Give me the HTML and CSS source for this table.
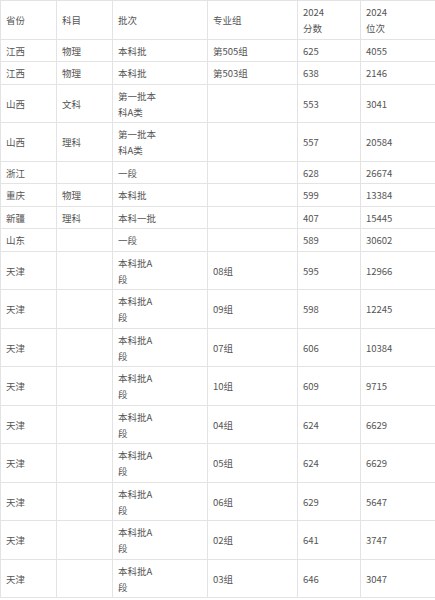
FILE: index.html
```html
<!DOCTYPE html>
<html lang="zh">
<head>
<meta charset="utf-8">
<link rel="stylesheet" href="styles.css">
</head>
<body>
<table class="score-table">
  <colgroup>
    <col class="c1"><col class="c2"><col class="c3"><col class="c4"><col class="c5"><col class="c6">
  </colgroup>
  <tbody>
    <tr><td>省份</td><td>科目</td><td>批次</td><td>专业组</td><td>2024<br>分数</td><td>2024<br>位次</td></tr>
    <tr><td>江西</td><td>物理</td><td>本科批</td><td>第505组</td><td>625</td><td>4055</td></tr>
    <tr><td>江西</td><td>物理</td><td>本科批</td><td>第503组</td><td>638</td><td>2146</td></tr>
    <tr><td>山西</td><td>文科</td><td>第一批本<br>科A类</td><td></td><td>553</td><td>3041</td></tr>
    <tr><td>山西</td><td>理科</td><td>第一批本<br>科A类</td><td></td><td>557</td><td>20584</td></tr>
    <tr><td>浙江</td><td></td><td>一段</td><td></td><td>628</td><td>26674</td></tr>
    <tr><td>重庆</td><td>物理</td><td>本科批</td><td></td><td>599</td><td>13384</td></tr>
    <tr><td>新疆</td><td>理科</td><td>本科一批</td><td></td><td>407</td><td>15445</td></tr>
    <tr><td>山东</td><td></td><td>一段</td><td></td><td>589</td><td>30602</td></tr>
    <tr><td>天津</td><td></td><td>本科批A<br>段</td><td>08组</td><td>595</td><td>12966</td></tr>
    <tr><td>天津</td><td></td><td>本科批A<br>段</td><td>09组</td><td>598</td><td>12245</td></tr>
    <tr><td>天津</td><td></td><td>本科批A<br>段</td><td>07组</td><td>606</td><td>10384</td></tr>
    <tr><td>天津</td><td></td><td>本科批A<br>段</td><td>10组</td><td>609</td><td>9715</td></tr>
    <tr><td>天津</td><td></td><td>本科批A<br>段</td><td>04组</td><td>624</td><td>6629</td></tr>
    <tr><td>天津</td><td></td><td>本科批A<br>段</td><td>05组</td><td>624</td><td>6629</td></tr>
    <tr><td>天津</td><td></td><td>本科批A<br>段</td><td>06组</td><td>629</td><td>5647</td></tr>
    <tr><td>天津</td><td></td><td>本科批A<br>段</td><td>02组</td><td>641</td><td>3747</td></tr>
    <tr><td>天津</td><td></td><td>本科批A<br>段</td><td>03组</td><td>646</td><td>3047</td></tr>
  </tbody>
</table>
</body>
</html>
```

FILE: styles.css
```css
html, body {
  margin: 0;
  padding: 0;
  background: #ffffff;
}

.score-table {
  border-collapse: collapse;
  table-layout: fixed;
  width: 435px;
  font-family: "Noto Sans CJK SC", "Noto Sans", sans-serif;
  font-size: 9.5px;
  line-height: 16px;
  color: #555555;
}

.c1 { width: 56px; }
.c2 { width: 56px; }
.c3 { width: 95px; }
.c4 { width: 90px; }
.c5 { width: 63px; }
.c6 { width: 75px; }

.score-table td {
  border: 1px solid #e3e3e3;
  padding: 3px 4px 2.5px 5px;
  vertical-align: middle;
  text-align: left;
  white-space: nowrap;
}
```
